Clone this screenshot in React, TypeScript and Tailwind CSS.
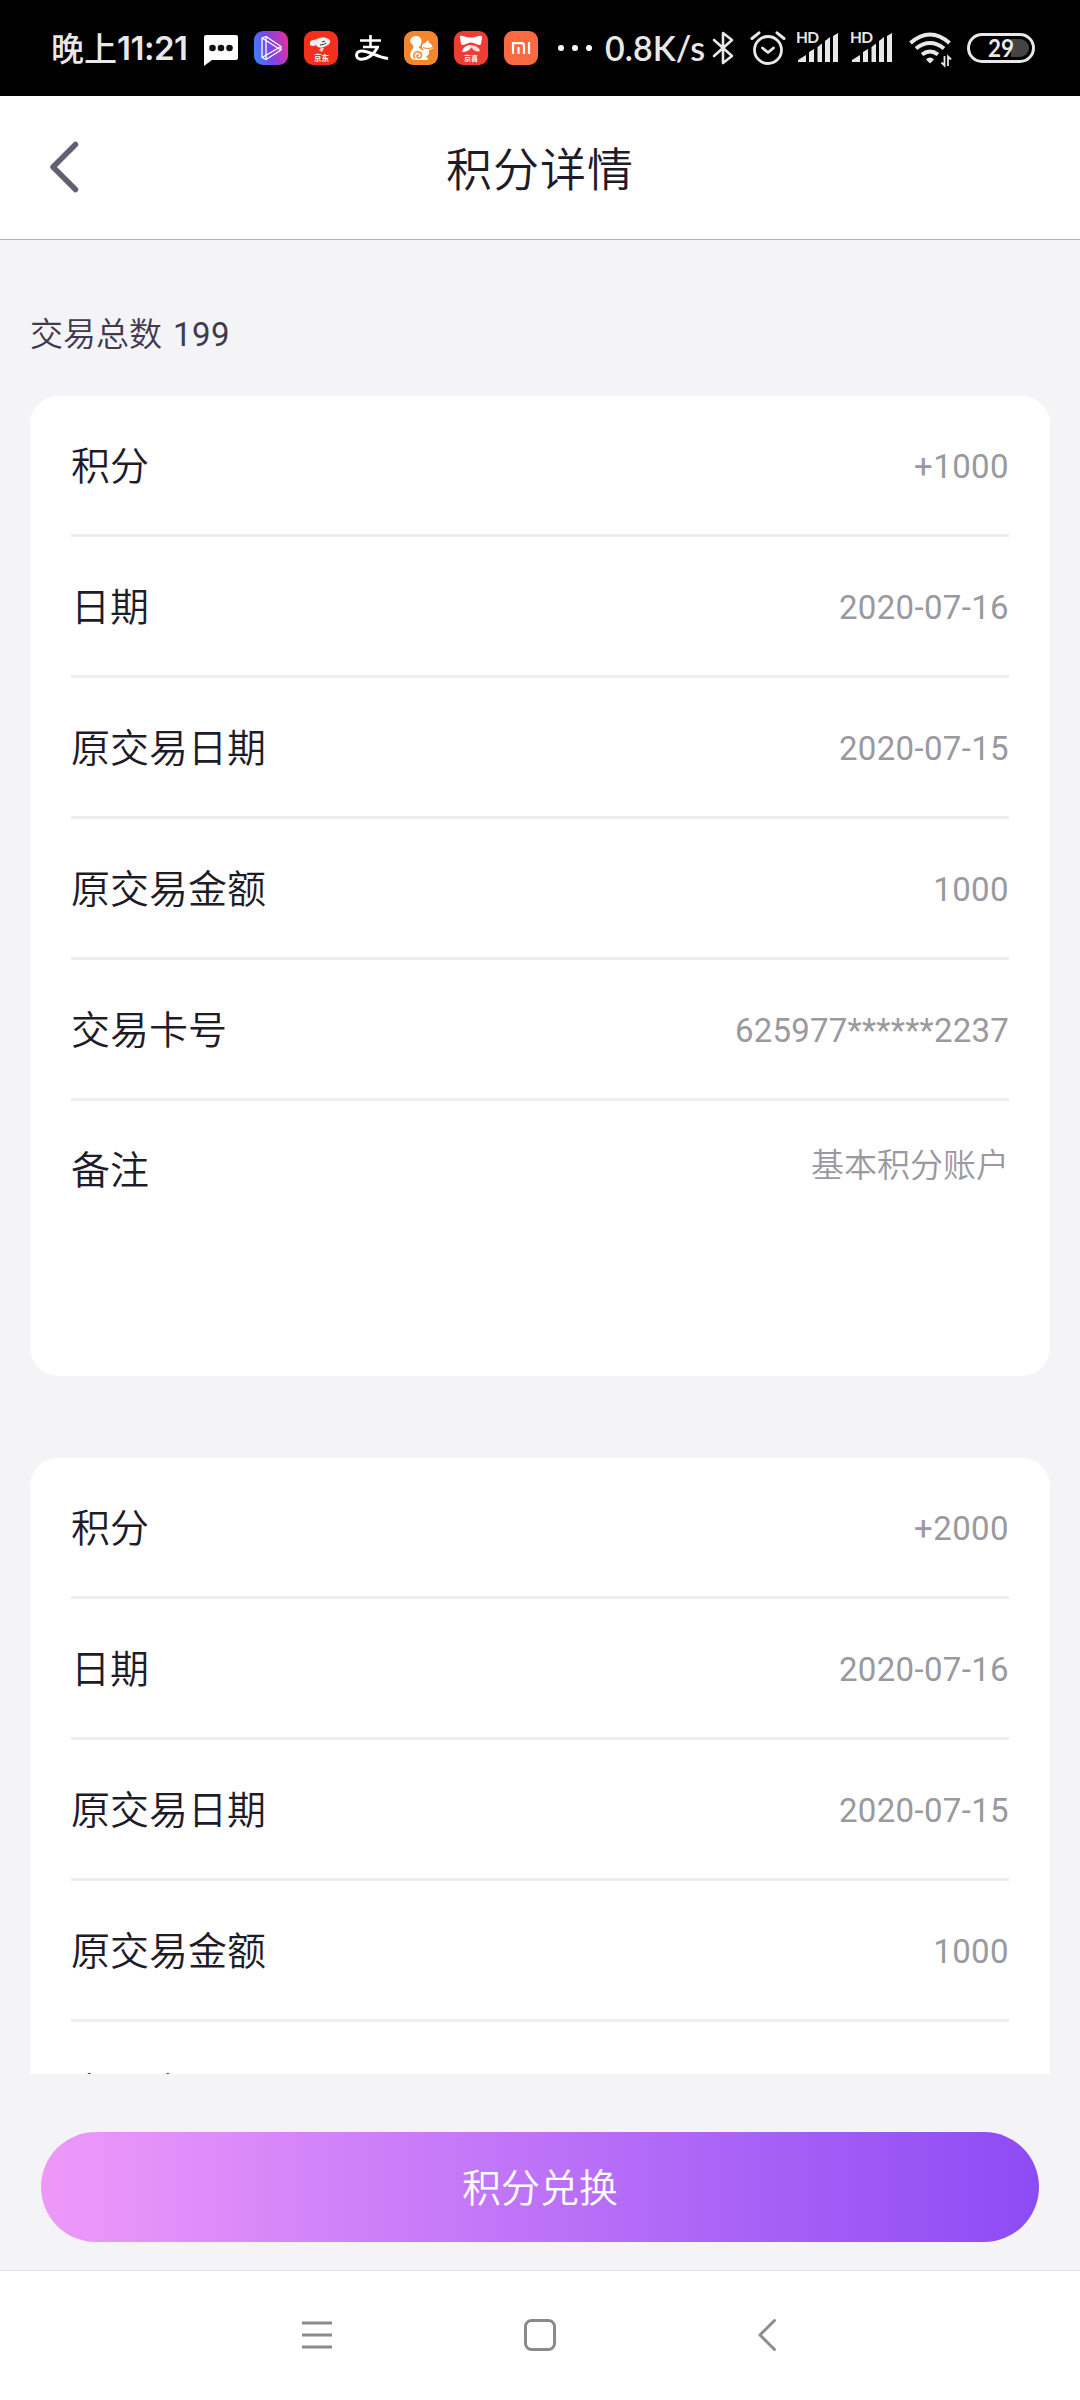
import type { ReactNode } from "react";

const CJK = "font-['Roboto','Noto_Sans_CJK_SC',sans-serif]";

function Glyph({ w, h, ml, children }: { w: number; h: number; ml: string; children: ReactNode }) {
  return (
    <svg width={w} height={h} viewBox={`0 0 ${w} ${h}`} className={`block shrink-0 overflow-visible ${ml}`} fill="none">
      {children}
    </svg>
  );
}

function Signal({ ml }: { ml: string }) {
  return (
    <Glyph w={43} h={34} ml={ml}>
      <text x="-1" y="12" fontSize="15.500" fontWeight="700" fill="#e8e8e8" fontFamily="Lato, sans-serif" textLength="23">HD</text>
      <g fill="#e8e8e8">
        <path d="M1 31V29L9 24V31Z" />
        <path d="M12 31V21L17 18V31Z" />
        <path d="M20.500 31V16L25 12.500V31Z" />
        <path d="M28 31V10L33 6V31Z" />
        <path d="M36 31V5L41 2V31Z" />
      </g>
    </Glyph>
  );
}

function StatusBar() {
  return (
    <div className="flex h-[96px] w-full shrink-0 items-center bg-black text-[#e8e8e8]">
      <div className="ml-[51px] flex w-[137px] items-center whitespace-nowrap pb-[2px] font-['Noto_Sans_CJK_SC',sans-serif] text-[33px] font-medium leading-[40px]">
        <span>晚上</span>
        <span className="pt-[2px] font-['Inter',sans-serif] text-[33px] font-semibold tracking-[-0.500px]">11:21</span>
      </div>

      <Glyph w={34} h={34} ml="ml-[16px]">
        <path d="M2 4H32Q34 4 34 6V27Q34 29 32 29H8L0 35V6Q0 4 2 4Z" fill="#fff" />
        <g fill="#111">
          <circle cx="8.500" cy="17" r="3.300" />
          <circle cx="17" cy="17" r="3.300" />
          <circle cx="25.500" cy="17" r="3.300" />
        </g>
      </Glyph>

      <Glyph w={34} h={34} ml="ml-[16px]">
        <defs>
          <linearGradient id="play" x1="0" y1=".6" x2="1" y2=".35">
            <stop offset="0" stopColor="#3f7dfb" />
            <stop offset=".45" stopColor="#7a45ea" />
            <stop offset="1" stopColor="#e42fa0" />
          </linearGradient>
        </defs>
        <rect width="34" height="34" rx="9" fill="url(#play)" />
        <g stroke="#fff" strokeWidth="1.300" strokeLinejoin="round">
          <path d="M8 7L12 5.500L27 15.500V19L12 28.500L8 26.500Z" />
          <path d="M12 5.500V28.500M8 7L27 19M8 26.500L27 15.500" />
        </g>
      </Glyph>

      <Glyph w={34} h={34} ml="ml-[16px]">
        <rect width="34" height="34" rx="9" fill="#f4301c" />
        <path d="M6 14Q5 9 10 9L13 8Q20 4 26 9Q27 13 22 15L20 16Q14 18 12 14Q9 16 6 14Z" fill="#eee" />
        <path d="M17 17L20 17L18 21L15 19Z" fill="#ddd" />
        <path d="M18 11L21 10M16 14Q20 14 22 12" stroke="#333" strokeWidth="1" />
        <text x="10" y="29.500" fontSize="7.500" fontWeight="700" fill="#fff" fontFamily="Noto Sans CJK SC, sans-serif">京东</text>
      </Glyph>

      <Glyph w={34} h={34} ml="ml-[17px]">
        <g stroke="#fff" strokeWidth="2.600">
          <path d="M5 9.500H26M15.500 4V15.500M8 16H24" />
          <path d="M22.500 16C19 24 12 28.500 6 28.200C0 27.800 0 20.500 6.500 20C13 19.500 22 26 33 27.500" strokeWidth="3" />
        </g>
      </Glyph>

      <Glyph w={34} h={34} ml="ml-[15px]">
        <rect width="34" height="34" rx="9" fill="#f6862d" />
        <path d="M12 5C7 5 4 10 8 13Q11 15 8 19C4 24 7 29 12 29H23C25 28 24 26 21.500 26C25 24 26 22 24.500 19.500L29 17.500C28 13 26 12 24.500 11.500V9L21 12C17 13 17 17 20 19L18 19.500Q17 17 14.500 17Q18 13 17.500 9.500Q17 5 12 5Z" fill="#fff" />
        <path d="M11 27.500C8 24 11 20 15 21C19 22.500 18 27.500 14.500 27C12 26 12.500 23.500 15 24.200" stroke="#f6862d" strokeWidth="1.500" />
        <path d="M19 16.500Q24 18.500 28.500 16.500" stroke="#f6862d" strokeWidth="1.200" />
      </Glyph>

      <Glyph w={34} h={34} ml="ml-[16px]">
        <rect width="34" height="34" rx="9" fill="#ee3d34" />
        <path d="M6 6Q5 4 9 5Q17 8 24 5Q29 4 28 7L27 13Q26 15 22 13Q17 10 12 13Q8 15 7 13Z" fill="#fff" />
        <path d="M8 21Q10 14 17 14Q25 15 26 20Q21 22 17.500 16.500Q15 21 8 21Z" fill="#ffd6d2" />
        <path d="M8 21Q10 14 17 14Q15 20 8 21Z" fill="#fff" />
        <text x="10" y="30" fontSize="7" fontWeight="700" fill="#fff" fontFamily="Noto Sans CJK SC, sans-serif">京喜</text>
      </Glyph>

      <Glyph w={34} h={34} ml="ml-[16px]">
        <rect width="34" height="34" rx="9" fill="#fa6a41" />
        <path d="M9 23V12.200H17.500Q20 12.200 20 15V23M14.500 16V23M25 11V23" stroke="#fff" strokeWidth="2.200" />
      </Glyph>

      <Glyph w={36} h={34} ml="ml-[20px]">
        <g fill="#fff">
          <circle cx="3" cy="17" r="3" />
          <circle cx="17" cy="17" r="3" />
          <circle cx="31" cy="17" r="3" />
        </g>
      </Glyph>

      <div className="ml-[11px] w-[99px] whitespace-nowrap font-['Lato',sans-serif] text-[34px] font-semibold leading-[40px] tracking-[0.100px]">
        0.8K/s
      </div>

      <Glyph w={22} h={34} ml="ml-[9px]">
        <path d="M1 9L19 25L10 32V2L19 9L1 25" stroke="#e8e8e8" strokeWidth="2.600" strokeLinejoin="round" strokeLinecap="round" />
      </Glyph>

      <Glyph w={36} h={34} ml="ml-[15px]">
        <g stroke="#e8e8e8" strokeLinecap="round" strokeLinejoin="round">
          <circle cx="18" cy="19" r="13.500" strokeWidth="2.800" />
          <path d="M12.500 17L18 21.500L23.500 17" strokeWidth="2.800" />
          <path d="M2 7.500L9 1.800M27 1.800L34 7.500" strokeWidth="3" />
        </g>
      </Glyph>

      <Signal ml="ml-[11px]" />
      <Signal ml="ml-[11px]" />

      <Glyph w={42} h={34} ml="ml-[15px]">
        <g stroke="#e8e8e8" strokeWidth="4">
          <path d="M1.500 12Q21 -5 40.500 12" />
          <path d="M7 17.500Q21 6.500 35 17.500" />
          <path d="M13 23.500Q21 17.500 29 23.500" />
        </g>
        <path d="M17 28.500Q21 24.500 25 28.500L21 32.500Z" fill="#e8e8e8" />
        <path d="M35.500 25V34.500L32.500 31.500M39 35V25.500L42 28.500" stroke="#e8e8e8" strokeWidth="1.800" />
      </Glyph>

      <Glyph w={68} h={34} ml="ml-[16px]">
        <path d="M44 8H53A9 9 0 0 1 53 26H44Z" fill="#444" />
        <rect x="1.500" y="3.500" width="65" height="27" rx="13.500" stroke="#e8e8e8" strokeWidth="3" />
        <text x="21" y="26" fontSize="25" fontWeight="700" fill="#e8e8e8" fontFamily="Lato, sans-serif" textLength="26" lengthAdjust="spacingAndGlyphs">29</text>
      </Glyph>
    </div>
  );
}

function Header() {
  return (
    <header className="grid h-[144px] w-full shrink-0 grid-cols-[1fr_auto_1fr] items-center border-b border-[#b4b4b7] bg-white">
      <svg width="34" height="54" viewBox="0 0 34 54" fill="none" className="mb-[2px] ml-[47px]">
        <path d="M28.500 4.500L6 27L28.500 49.500" stroke="#635e70" strokeWidth="5.500" strokeLinecap="round" strokeLinejoin="round" />
      </svg>
      <h1 className="pt-[4px] text-[46px] font-[350] leading-[60px] tracking-[1px] text-[#1f1c29]">积分详情</h1>
      <span />
    </header>
  );
}

type Entry = { label: string; value: string; tracking: string };

function makeEntries(points: string): Entry[] {
  return [
    { label: "积分", value: points, tracking: "tracking-[0.400px]" },
    { label: "日期", value: "2020-07-16", tracking: "tracking-[0.350px]" },
    { label: "原交易日期", value: "2020-07-15", tracking: "tracking-[0.350px]" },
    { label: "原交易金额", value: "1000", tracking: "tracking-[0.400px]" },
    { label: "交易卡号", value: "625977******2237", tracking: "tracking-[0.200px]" },
  ];
}

function PointsCard({ points }: { points: string }) {
  return (
    <section className="h-[980px] shrink-0 rounded-[28px] bg-white px-[41px]">
      {makeEntries(points).map((e) => (
        <div key={e.label} className="flex h-[141px] items-center justify-between border-b-[3px] border-[#ededee] pt-[4px]">
          <span className="text-[39px] font-[350] leading-[56px] text-[#1f1c29]">{e.label}</span>
          <span className={`text-[33px] leading-[48px] text-[#9a999f] ${e.tracking}`}>{e.value}</span>
        </div>
      ))}
      <div className="flex h-[138px] items-center justify-between pt-[2px]">
        <span className="text-[39px] font-[350] leading-[56px] text-[#1f1c29]">备注</span>
        <span className="mb-[10px] text-[33px] font-[350] leading-[48px] text-[#9a999f]">基本积分账户</span>
      </div>
    </section>
  );
}

function NavBar() {
  return (
    <nav className="flex h-[130px] w-full shrink-0 items-center border-t border-[#e0e0e2] bg-white pb-[2px]">
      <svg width="30" height="34" viewBox="0 0 30 34" fill="none" className="ml-[302px]">
        <path d="M0 5H30M0 17H30M0 29H30" stroke="#8b8b8b" strokeWidth="3" />
      </svg>
      <svg width="32" height="34" viewBox="0 0 32 34" fill="none" className="ml-[192px]">
        <rect x="1.500" y="2.500" width="29" height="29" rx="6" stroke="#8b8b8b" strokeWidth="3" />
      </svg>
      <svg width="20" height="34" viewBox="0 0 20 34" fill="none" className="ml-[201px]">
        <path d="M17.500 2.500L3 17L17.500 31.500" stroke="#8b8b8b" strokeWidth="3" strokeLinecap="round" strokeLinejoin="round" />
      </svg>
    </nav>
  );
}

export default function App() {
  return (
    <div lang="zh-CN" className={`flex h-[2400px] w-[1080px] flex-col overflow-hidden bg-[#f4f4f7] ${CJK}`}>
      <StatusBar />
      <Header />
      <main className="flex h-[1834px] shrink-0 flex-col overflow-hidden px-[30px]">
        <p className="mt-[71px] flex h-[48px] shrink-0 gap-[11px] text-[33px] leading-[48px] text-[#403a4f]">
          <span className="font-[350]">交易总数</span>
          <span className="tracking-[0.500px]">199</span>
        </p>
        <div className="mt-[37px] flex flex-col gap-[82px]">
          <PointsCard points="+1000" />
          <PointsCard points="+2000" />
        </div>
      </main>
      <div className="flex h-[196px] shrink-0 items-start px-[41px] pt-[58px]">
        <button className="h-[110px] w-full rounded-full bg-linear-to-r/srgb from-[#ee99f9] via-[#bd72f8] to-[#8d4bf4] pt-[4px] text-[39px] font-[350] leading-[56px] text-white">
          积分兑换
        </button>
      </div>
      <NavBar />
    </div>
  );
}
